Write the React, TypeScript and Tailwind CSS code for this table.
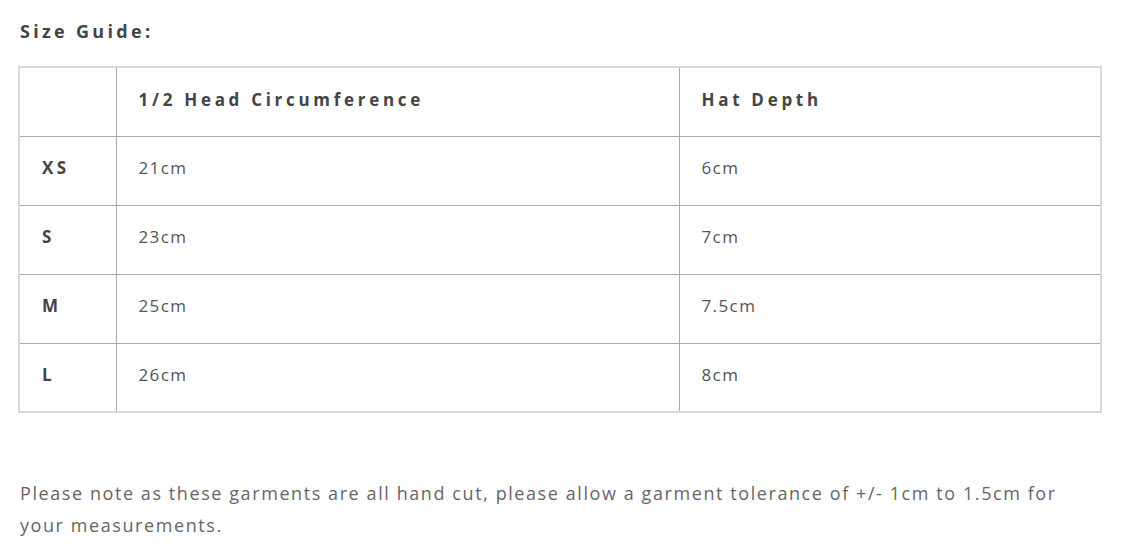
const rows = [
  { size: "XS", head: "21cm", depth: "6cm" },
  { size: "S", head: "23cm", depth: "7cm" },
  { size: "M", head: "25cm", depth: "7.5cm" },
  { size: "L", head: "26cm", depth: "8cm" },
];

const SizeGuide = () => {
  return (
    <div className="bg-white min-h-[558px] pl-[18px] pt-[20px] font-['Open_Sans',sans-serif] text-[#555]">
      <div className="pl-[2px] text-[18px] font-bold tracking-[3.3px] text-[#444] leading-[22px]">
        Size Guide:
      </div>

      <table className="mt-[24px] w-[1084px] border-collapse border-2 border-[#d9d9d9] table-fixed">
        <colgroup>
          <col className="w-[97px]" />
          <col className="w-[563px]" />
          <col />
        </colgroup>
        <thead>
          <tr className="h-[69px]">
            <th className="border border-[#aaa] border-t-[#d9d9d9] border-l-[#d9d9d9]"></th>
            <th className="border border-[#aaa] border-t-[#d9d9d9] px-[22px] pb-[5px] text-left text-[17px] font-bold tracking-[3.7px] text-[#444]">
              1/2 Head Circumference
            </th>
            <th className="border border-[#aaa] border-t-[#d9d9d9] border-r-[#d9d9d9] px-[22px] pb-[5px] text-left text-[17px] font-bold tracking-[3.7px] text-[#444]">
              Hat Depth
            </th>
          </tr>
        </thead>
        <tbody>
          {rows.map((r, i) => (
            <tr key={r.size} className="h-[69px]">
              <td
                className={
                  "border border-[#aaa] border-l-[#d9d9d9] px-[22px] pb-[5px] text-[17px] font-bold tracking-[3.5px] text-[#444]" +
                  (i === rows.length - 1 ? " border-b-[#d9d9d9]" : "")
                }
              >
                {r.size}
              </td>
              <td
                className={
                  "border border-[#aaa] px-[22px] pb-[5px] text-[17px] tracking-[1.4px]" +
                  (i === rows.length - 1 ? " border-b-[#d9d9d9]" : "")
                }
              >
                {r.head}
              </td>
              <td
                className={
                  "border border-[#aaa] border-r-[#d9d9d9] px-[22px] pb-[5px] text-[17px] tracking-[1.4px]" +
                  (i === rows.length - 1 ? " border-b-[#d9d9d9]" : "")
                }
              >
                {r.depth}
              </td>
            </tr>
          ))}
        </tbody>
      </table>

      <p className="mt-[64px] pl-[2px] w-[1064px] text-[18px] leading-[32px] tracking-[1.58px] text-[#666]">
        Please note as these garments are all hand cut, please allow a garment tolerance of +/- 1cm to 1.5cm for your
        measurements.
      </p>
    </div>
  );
};

export default function App() {
  return <SizeGuide />;
}
